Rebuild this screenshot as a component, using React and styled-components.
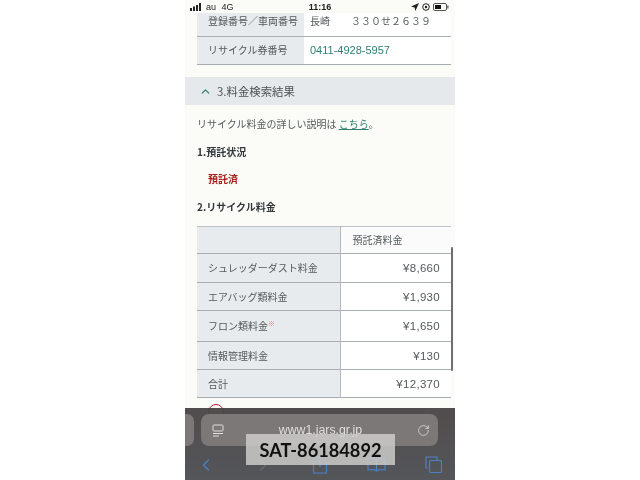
import React from "react";
import styled, { createGlobalStyle } from "styled-components";
import { ChevronUp, ChevronLeft, ChevronRight, RotateCw } from "lucide-react";

const GlobalStyle = createGlobalStyle`
  html, body {
    margin: 0;
    padding: 0;
    background: #fff;
  }
`;

const Page = styled.div`
  width: 640px;
  height: 480px;
  display: flex;
  justify-content: center;
  overflow: hidden;
`;

const Phone = styled.div`
  position: relative;
  width: 270px;
  height: 480px;
  overflow: hidden;
  background: #fbfcf8;
  color: #55595c;
  font-family: "Noto Sans CJK JP", "Noto Sans", sans-serif;
  font-size: 10px;
  filter: blur(0.3px);
`;

const StatusBar = styled.div`
  position: relative;
  z-index: 1;
  height: 13px;
  padding: 0 5px;
  display: grid;
  grid-template-columns: 1fr auto 1fr;
  align-items: center;
  background: #fbfcf8;
  color: #222;
  font-family: "Liberation Sans", sans-serif;
  font-size: 9px;
`;

const Carrier = styled.div`
  display: flex;
  align-items: center;
  gap: 3px;
`;

const Clock = styled.div`
  font-weight: 700;
`;

const StatusIcons = styled.div`
  display: flex;
  justify-content: flex-end;
  align-items: center;
  gap: 3px;
  padding-right: 1px;
`;

const InfoTable = styled.div`
  margin: -7px 4px 12px 12px;
  border-bottom: 1px solid #a6acb2;
`;

const InfoRow = styled.div`
  display: grid;
  grid-template-columns: 107px 1fr;
  height: ${(p) => p.$height}px;
  & + & {
    border-top: 1px solid #a9afb5;
  }
`;

const InfoLabel = styled.div`
  display: flex;
  align-items: center;
  padding: 0 0 2px 11px;
  background: #e8ebee;
  white-space: nowrap;
`;

const InfoValue = styled.div`
  display: flex;
  align-items: center;
  padding: 0 0 2px 6px;
  background: #fff;
  white-space: nowrap;
  color: ${(p) => (p.$link ? "#2f7f73" : "#55595c")};
  font-family: ${(p) => (p.$link ? '"Liberation Sans", sans-serif' : "inherit")};
  font-size: ${(p) => (p.$link ? "11px" : "10px")};
`;

const Plate = styled.span`
  margin-left: 21px;
`;

const SectionHeader = styled.div`
  height: 28px;
  display: flex;
  align-items: center;
  gap: 5px;
  padding-left: 14px;
  background: #e6e9ec;
  font-size: 11.4px;
  color: #4d5154;
`;

const Body = styled.div`
  padding: 11px 4px 0 12px;
`;

const Intro = styled.p`
  margin: 0 0 12px;
  height: 16px;
  line-height: 16px;
`;

const Link = styled.a`
  color: #2f7f73;
  text-decoration: underline;
`;

const Heading = styled.h3`
  margin: 0 0 ${(p) => p.$gap}px;
  height: 16px;
  line-height: 16px;
  font-size: 10px;
  font-weight: 700;
  color: #33363a;
`;

const Status = styled.div`
  height: 16px;
  line-height: 16px;
  margin: 0 0 12px 11px;
  font-weight: 700;
  color: #a8201f;
`;

const FeeTable = styled.table`
  width: 254px;
  border-collapse: collapse;
  table-layout: fixed;
  border-top: 1px solid #bcc2c8;
  border-bottom: 1px solid #a6acb2;
`;

const LabelCol = styled.col`
  width: 143px;
`;

const FeeRow = styled.tr`
  height: ${(p) => p.$height}px;
  & + & {
    border-top: 1px solid #a9afb5;
  }
`;

const FeeLabel = styled.td`
  padding: 0 0 1px 11px;
  background: #e8ebee;
  border-right: 1px solid #b4bac1;
`;

const FeeHead = styled.td`
  padding: 0 0 1px 12px;
  background: #fafbfa;
`;

const FeeValue = styled.td`
  padding: 0 11px 0 0;
  background: #fff;
  text-align: right;
  font-family: "Liberation Sans", sans-serif;
  font-size: 11.5px;
  letter-spacing: 0.3px;
`;

const Note = styled.sup`
  font-size: 7px;
  line-height: 0;
  color: #d77b78;
`;

const WarningMark = styled.div`
  width: 16px;
  height: 16px;
  margin: 6px 0 0 11px;
  box-sizing: border-box;
  border: 1.5px solid #a8243a;
  border-radius: 50%;
`;

const ScrollThumb = styled.div`
  position: absolute;
  top: 247px;
  right: 2px;
  width: 2px;
  height: 124px;
  border-radius: 1px;
  background: #6c6f72;
`;

const SafariBar = styled.div`
  position: absolute;
  left: 0;
  right: 0;
  bottom: 0;
  height: 72px;
  background: linear-gradient(rgba(74, 69, 70, 0.96), #54565a);
`;

const AddressRow = styled.div`
  position: relative;
  height: 43px;
  padding: 6px 0 0 16px;
  box-sizing: border-box;
`;

const PrevTab = styled.div`
  position: absolute;
  left: 0;
  top: 6px;
  width: 9px;
  height: 32px;
  border-radius: 0 7px 7px 0;
  background: #7b7877;
`;

const AddressField = styled.div`
  width: 237px;
  height: 32px;
  display: grid;
  grid-template-columns: 34px 1fr 30px;
  align-items: center;
  justify-items: center;
  border-radius: 8px;
  background: #7b7877;
  color: #e0dfde;
`;

const Url = styled.span`
  font-family: "Liberation Sans", sans-serif;
  font-size: 12.3px;
  padding-right: 2px;
`;

const ToolBar = styled.div`
  display: grid;
  grid-template-columns: repeat(5, 20px);
  justify-content: space-between;
  justify-items: center;
  align-items: center;
  height: 27px;
  padding: 0 12px 0 11px;
  color: #4a80c4;
`;

const Watermark = styled.div`
  position: absolute;
  left: 61px;
  top: 434px;
  width: 149px;
  height: 31px;
  display: flex;
  align-items: center;
  justify-content: center;
  background: rgba(205, 205, 203, 0.84);
  color: #111;
  font-family: "Lato", sans-serif;
  font-size: 18.2px;
  font-weight: 700;
`;

const fees = [
  { label: "シュレッダーダスト料金", value: "¥8,660", height: 29 },
  { label: "エアバッグ類料金", value: "¥1,930", height: 28 },
  { label: "フロン類料金", value: "¥1,650", height: 31, note: true },
  { label: "情報管理料金", value: "¥130", height: 28 },
  { label: "合計", value: "¥12,370", height: 28 },
];

function SignalIcon() {
  return (
    <svg width="13" height="8" viewBox="0 0 13 8" fill="#222">
      <rect x="0" y="5" width="2" height="3" />
      <rect x="3" y="3.5" width="2" height="4.5" />
      <rect x="6" y="2" width="2" height="6" />
      <rect x="9" y="0" width="2" height="8" />
    </svg>
  );
}

function LocationIcon() {
  return (
    <svg width="8" height="8" viewBox="0 0 8 8" fill="#222">
      <path d="M8 0 L0 3.6 L3.6 4.4 L4.4 8 Z" />
    </svg>
  );
}

function LockIcon() {
  return (
    <svg width="8" height="8" viewBox="0 0 8 8" fill="none" stroke="#222">
      <circle cx="4" cy="4" r="3.3" />
      <circle cx="4" cy="4" r="1.2" fill="#222" stroke="none" />
    </svg>
  );
}

function BatteryIcon() {
  return (
    <svg width="16" height="8" viewBox="0 0 16 8">
      <rect x="0.5" y="0.5" width="13" height="7" rx="1.5" fill="none" stroke="#555" />
      <rect x="2" y="2" width="6" height="4" fill="#111" />
      <rect x="14.3" y="2.5" width="1.2" height="3" fill="#555" />
    </svg>
  );
}

function ReaderIcon() {
  return (
    <svg width="12" height="13" viewBox="0 0 12 13" fill="none" stroke="#e0dfde" strokeWidth="1">
      <rect x="1" y="1" width="10" height="6" rx="1" />
      <path d="M1 9.5 H11 M1 12 H7" />
    </svg>
  );
}

function ShareIcon() {
  return (
    <svg width="16" height="19" viewBox="0 0 16 19" fill="none" stroke="currentColor" strokeWidth="1.2">
      <path d="M5 7 H1.5 V18 H14.5 V7 H11 M8 12 V1 M5 3.5 L8 1 L11 3.5" />
    </svg>
  );
}

function BookIcon() {
  return (
    <svg width="19" height="15" viewBox="0 0 19 15" fill="none" stroke="currentColor" strokeWidth="1.2">
      <path d="M9.5 3 C7.5 1 4 1 1 1.5 V13 C4 12.5 7.5 12.5 9.5 14 C11.5 12.5 15 12.5 18 13 V1.5 C15 1 11.5 1 9.5 3 Z M9.5 3 V14" />
    </svg>
  );
}

function TabsIcon() {
  return (
    <svg width="17" height="17" viewBox="0 0 17 17" fill="none" stroke="currentColor" strokeWidth="1.2">
      <path d="M3 12 H1 V1 H12 V4" />
      <rect x="4.5" y="4.5" width="12" height="12" rx="1.5" />
    </svg>
  );
}

export default function App() {
  return (
    <Page>
      <GlobalStyle />
      <Phone>
        <StatusBar>
          <Carrier>
            <SignalIcon />
            <span>au</span>
            <span>&nbsp;4G</span>
          </Carrier>
          <Clock>11:16</Clock>
          <StatusIcons>
            <LocationIcon />
            <LockIcon />
            <BatteryIcon />
          </StatusIcons>
        </StatusBar>

        <InfoTable>
          <InfoRow $height={30}>
            <InfoLabel>登録番号／車両番号</InfoLabel>
            <InfoValue>
              長崎<Plate>３３０せ２６３９</Plate>
            </InfoValue>
          </InfoRow>
          <InfoRow $height={27}>
            <InfoLabel>リサイクル券番号</InfoLabel>
            <InfoValue $link>0411-4928-5957</InfoValue>
          </InfoRow>
        </InfoTable>

        <SectionHeader>
          <ChevronUp size={13} color="#2f7f73" strokeWidth={2.4} />
          <span>3.料金検索結果</span>
        </SectionHeader>

        <Body>
          <Intro>
            リサイクル料金の詳しい説明は <Link>こちら</Link>。
          </Intro>
          <Heading $gap={11}>1.預託状況</Heading>
          <Status>預託済</Status>
          <Heading $gap={11}>2.リサイクル料金</Heading>
          <FeeTable>
            <colgroup>
              <LabelCol />
              <col />
            </colgroup>
            <tbody>
              <FeeRow $height={27}>
                <FeeLabel />
                <FeeHead>預託済料金</FeeHead>
              </FeeRow>
              {fees.map((fee) => (
                <FeeRow key={fee.label} $height={fee.height}>
                  <FeeLabel>
                    {fee.label}
                    {fee.note && <Note>※</Note>}
                  </FeeLabel>
                  <FeeValue>{fee.value}</FeeValue>
                </FeeRow>
              ))}
            </tbody>
          </FeeTable>
          <WarningMark />
        </Body>

        <ScrollThumb />

        <SafariBar>
          <AddressRow>
            <PrevTab />
            <AddressField>
              <ReaderIcon />
              <Url>www1.jars.gr.jp</Url>
              <RotateCw size={13} color="#e0dfde" strokeWidth={1.4} />
            </AddressField>
          </AddressRow>
          <ToolBar>
            <ChevronLeft size={20} strokeWidth={1.6} />
            <ChevronRight size={20} strokeWidth={1.6} color="#6a6a6c" />
            <ShareIcon />
            <BookIcon />
            <TabsIcon />
          </ToolBar>
        </SafariBar>

        <Watermark>SAT-86184892</Watermark>
      </Phone>
    </Page>
  );
}
